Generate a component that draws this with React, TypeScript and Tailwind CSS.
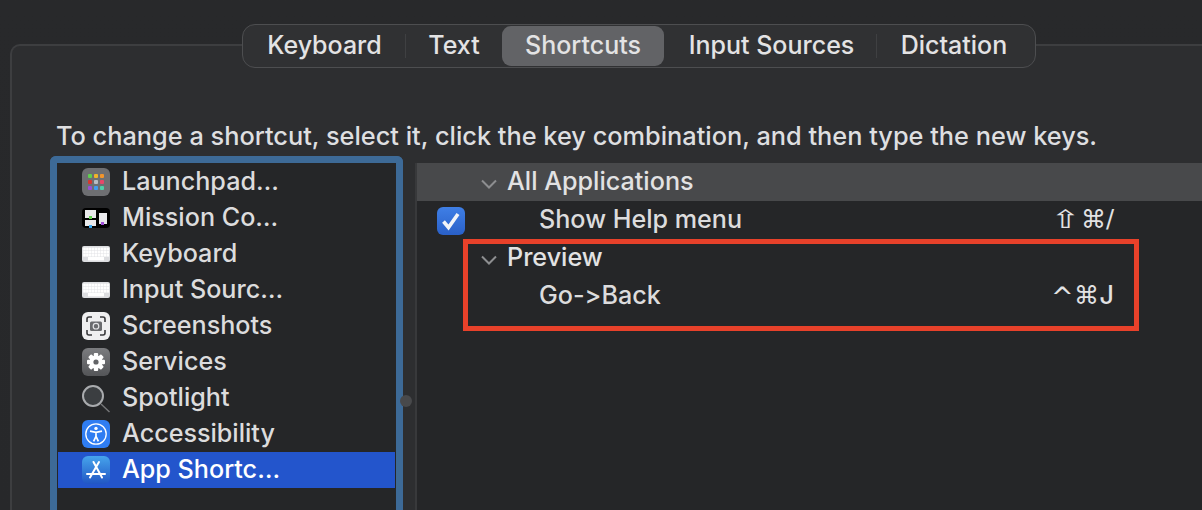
import type { ReactNode } from 'react';

const font = { fontFamily: 'Inter, "Noto Sans", sans-serif' };

function Launchpad() {
    const colors = ['#5fd04f', '#f0b429', '#f2952c', '#d9362e', '#b8bcc2', '#e8476a', '#9a4fd6', '#3f9cf0', '#4fd0a8'];
    return (
        <div className="w-[28px] h-[28px] rounded-[6px] bg-[#6e6f72] grid grid-cols-3 gap-[2px] p-[6px]">
            {colors.map((c) => (
                <div key={c} className="rounded-[1px]" style={{ backgroundColor: c }} />
            ))}
        </div>
    );
}

function MissionControl() {
    return (
        <svg width="28" height="20" viewBox="0 0 28 20">
            <rect width="28" height="20" rx="4" fill="#000" />
            <rect x="3" y="2" width="11" height="8" fill="#e8e8ea" />
            <rect x="3" y="12" width="11" height="6" fill="#e8e8ea" />
            <rect x="17" y="5" width="8" height="11" fill="#e8e8ea" />
            <rect x="7" y="8" width="3" height="3" fill="#62d04e" />
            <rect x="7" y="17" width="3" height="3" fill="#38a8f0" />
            <rect x="19" y="14" width="3" height="3" fill="#a04fd8" />
        </svg>
    );
}

function KeyboardIcon() {
    const keys = [];
    for (let r = 0; r < 3; r++) {
        for (let c = 0; c < 9; c++) {
            keys.push(<rect key={`${r}-${c}`} x={1.2 + c * 2.9} y={1.6 + r * 3.1} width="2.6" height="2.8" fill="#ffffff" />);
        }
    }
    return (
        <svg width="28" height="16" viewBox="0 0 28 16">
            <rect width="28" height="16" rx="2" fill="#dcdde0" />
            {keys}
            <rect x="6" y="11" width="16" height="3.4" fill="#ffffff" />
        </svg>
    );
}

function ScreenshotIcon() {
    return (
        <svg width="28" height="28" viewBox="0 0 28 28">
            <rect width="28" height="28" rx="6" fill="#efeff0" />
            <path d="M5 10V7a2 2 0 0 1 2-2h3M18 5h3a2 2 0 0 1 2 2v3M23 18v3a2 2 0 0 1-2 2h-3M10 23H7a2 2 0 0 1-2-2v-3" fill="none" stroke="#3a3a3c" strokeWidth="1.6" />
            <rect x="8" y="9.5" width="12" height="9.5" rx="1.5" fill="#6a6b6e" />
            <circle cx="14" cy="14.2" r="2.8" fill="none" stroke="#e4e4e6" strokeWidth="1.2" />
        </svg>
    );
}

function ServicesIcon() {
    const teeth = [0, 45, 90, 135];
    return (
        <div className="w-[28px] h-[28px] rounded-[6px] bg-gradient-to-b from-[#7b7c7f] to-[#545558] flex items-center justify-center">
            <svg width="20" height="20" viewBox="0 0 20 20">
                {teeth.map((a) => (
                    <rect key={a} x="7.8" y="1" width="4.4" height="18" rx="1" fill="#fff" transform={`rotate(${a} 10 10)`} />
                ))}
                <circle cx="10" cy="10" r="6.6" fill="#fff" />
                <circle cx="10" cy="10" r="2.6" fill="#636467" />
            </svg>
        </div>
    );
}

function SpotlightIcon() {
    return (
        <svg width="30" height="30" viewBox="0 0 30 30" className="mt-[2px] shrink-0">
            <circle cx="12" cy="12" r="10" fill="#3b3e41" stroke="#a9abae" strokeWidth="2" />
            <path d="M20 20l8.5 8" stroke="#77787a" strokeWidth="1.4" />
        </svg>
    );
}

function AccessibilityIcon() {
    return (
        <svg width="28" height="28" viewBox="0 0 28 28">
            <rect width="28" height="28" rx="6" fill="#2f7df2" />
            <circle cx="14" cy="14" r="10.2" fill="none" stroke="#fff" strokeWidth="1.3" />
            <circle cx="14" cy="8.4" r="1.7" fill="#fff" />
            <path d="M8 11.2l6 1.2 6-1.2M14 12.4v4M14 16.4l-2.4 5M14 16.4l2.4 5" fill="none" stroke="#fff" strokeWidth="1.7" />
        </svg>
    );
}

function AppStoreIcon() {
    return (
        <svg width="28" height="28" viewBox="0 0 28 28">
            <defs>
                <linearGradient id="appstore" x1="0" y1="0" x2="0" y2="1">
                    <stop offset="0" stopColor="#46a4ec" />
                    <stop offset="1" stopColor="#2156c4" />
                </linearGradient>
            </defs>
            <rect width="28" height="28" rx="6" fill="url(#appstore)" />
            <path d="M11.5 6l8.5 15.5M17 6L8 21.5M5 18h18" fill="none" stroke="#fff" strokeWidth="2" strokeLinecap="round" />
        </svg>
    );
}

const sources: { label: string; icon: ReactNode; selected?: boolean }[] = [
    { label: 'Launchpad…', icon: <Launchpad /> },
    { label: 'Mission Co…', icon: <MissionControl /> },
    { label: 'Keyboard', icon: <KeyboardIcon /> },
    { label: 'Input Sourc…', icon: <KeyboardIcon /> },
    { label: 'Screenshots', icon: <ScreenshotIcon /> },
    { label: 'Services', icon: <ServicesIcon /> },
    { label: 'Spotlight', icon: <SpotlightIcon /> },
    { label: 'Accessibility', icon: <AccessibilityIcon /> },
    { label: 'App Shortc…', icon: <AppStoreIcon />, selected: true },
];

function Tab({ label, active, width }: { label: string; active?: boolean; width: string }) {
    return (
        <div className={`${width} h-[40px] flex items-center justify-center rounded-[9px] pb-[2px] ${active ? 'bg-[#626366]' : ''}`}>
            {label}
        </div>
    );
}

function GroupRow({ label, active }: { label: string; active?: boolean }) {
    return (
        <div className={`h-[38px] flex items-center pl-[64px] ${active ? 'bg-[#48494b]' : ''}`}>
            <svg width="16" height="10" viewBox="0 0 16 10" className="mr-[10px] mt-[3px]">
                <path d="M1 1.5l7 7 7-7" fill="none" stroke="#8d8e90" strokeWidth="2" />
            </svg>
            <span className="text-[#e2e2e3]">{label}</span>
        </div>
    );
}

function ShortcutRow({ label, keys, checked }: { label: string; keys: ReactNode; checked?: boolean }) {
    return (
        <div className="relative h-[38px] flex items-center justify-between pl-[122px] pr-[88px]">
            {checked && (
                <div className="absolute left-[20px] top-[6px] w-[28px] h-[28px] rounded-[6px] bg-gradient-to-b from-[#3f7fe6] to-[#2a60c8] flex items-center justify-center">
                    <svg width="22" height="22" viewBox="0 0 22 22">
                        <path d="M3.5 11.5l5 6 9.5-13.5" fill="none" stroke="#f2f4f8" strokeWidth="3.6" />
                    </svg>
                </div>
            )}
            <span className="text-[#dcdcdd]">{label}</span>
            <div className="flex items-center text-[#e2e2e3] [font-family:'DejaVu_Sans',sans-serif] mb-[2px]">{keys}</div>
        </div>
    );
}

export default function App() {
    return (
        <div className="relative w-[1202px] h-[510px] overflow-hidden bg-gradient-to-b from-[#28292b] to-[#27282a] text-[25.15px] leading-none font-[450] [font-variant-ligatures:none]" style={font}>
            <div className="absolute left-[242px] top-[24px] z-10 w-[794px] h-[44px] rounded-[13px] border border-[#4d4e50] bg-[#303133] p-[1px] flex items-center text-[#e3e3e4] text-[25px]">
                <Tab label="Keyboard" width="w-[161px]" />
                <div className="w-px h-[24px] bg-[#3f4042]" />
                <Tab label="Text" width="w-[96px]" />
                <Tab label="Shortcuts" active width="w-[162px]" />
                <Tab label="Input Sources" width="w-[212px] pl-[3px]" />
                <div className="w-px h-[24px] bg-[#3f4042]" />
                <Tab label="Dictation" width="w-[157px] pr-[3px]" />
            </div>

            <div className="relative mt-[44px] ml-[10px] h-[466px] rounded-tl-[10px] border-l-2 border-t-2 border-[#3d3e40] bg-[#2d2e30] pt-[76px]">
                <div className="pl-[44px] h-[28px] flex items-center text-[#dedfe0] text-[25.33px] whitespace-nowrap">
                    To change a shortcut, select it, click the key combination, and then type the new keys.
                </div>

                <div className="flex mt-[6px] items-start">
                    <div className="ml-[38px] w-[353px] h-[360px] rounded-t-[6px] border-x-[7px] border-t-[7px] border-[#3d6a97] bg-[#252628] shrink-0 pt-[1px]">
                        {sources.map((s) => (
                            <div key={s.label} className={`h-[36px] flex items-center ${s.selected ? 'bg-[#2355cc] text-white mx-[1px]' : 'text-[#dcdcdd]'}`}>
                                <div className={`${s.selected ? 'w-[52px]' : 'w-[53px]'} flex justify-end shrink-0`}>
                                    <div className="w-[28px] flex items-center justify-center">{s.icon}</div>
                                </div>
                                <span className="ml-[12px]">{s.label}</span>
                            </div>
                        ))}
                    </div>

                    <div className="w-[12px] shrink-0 h-[360px] relative">
                        <div className="absolute left-[-3px] top-[239px] w-[12px] h-[12px] rounded-full bg-[#48494b]" />
                    </div>

                    <div className="flex-1 h-[360px] mt-[7px] border-l-2 border-[#38393b] bg-[#252628]">
                        <GroupRow label="All Applications" active />
                        <ShortcutRow
                            label="Show Help menu"
                            checked
                            keys={
                                <>
                                    <span className="text-[25px] mr-[5px] scale-x-[1.45]">⇧</span>
                                    <span className="text-[25px] w-[25px]">⌘</span>
                                    <span className="text-[24px]">/</span>
                                </>
                            }
                        />
                        <GroupRow label="Preview" />
                        <ShortcutRow
                            label="Go->Back"
                            keys={
                                <>
                                    <span className="text-[27px] w-[23px] mt-[2px]">^</span>
                                    <span className="text-[25px] w-[25px]">⌘</span>
                                    <span className="text-[25px] w-[15px] text-right [font-family:Inter,sans-serif]">J</span>
                                </>
                            }
                        />
                    </div>
                </div>
            </div>

            <div className="absolute left-[463px] top-[239px] w-[676px] h-[92px] border-[5px] border-[#e8412a]" />
        </div>
    );
}
